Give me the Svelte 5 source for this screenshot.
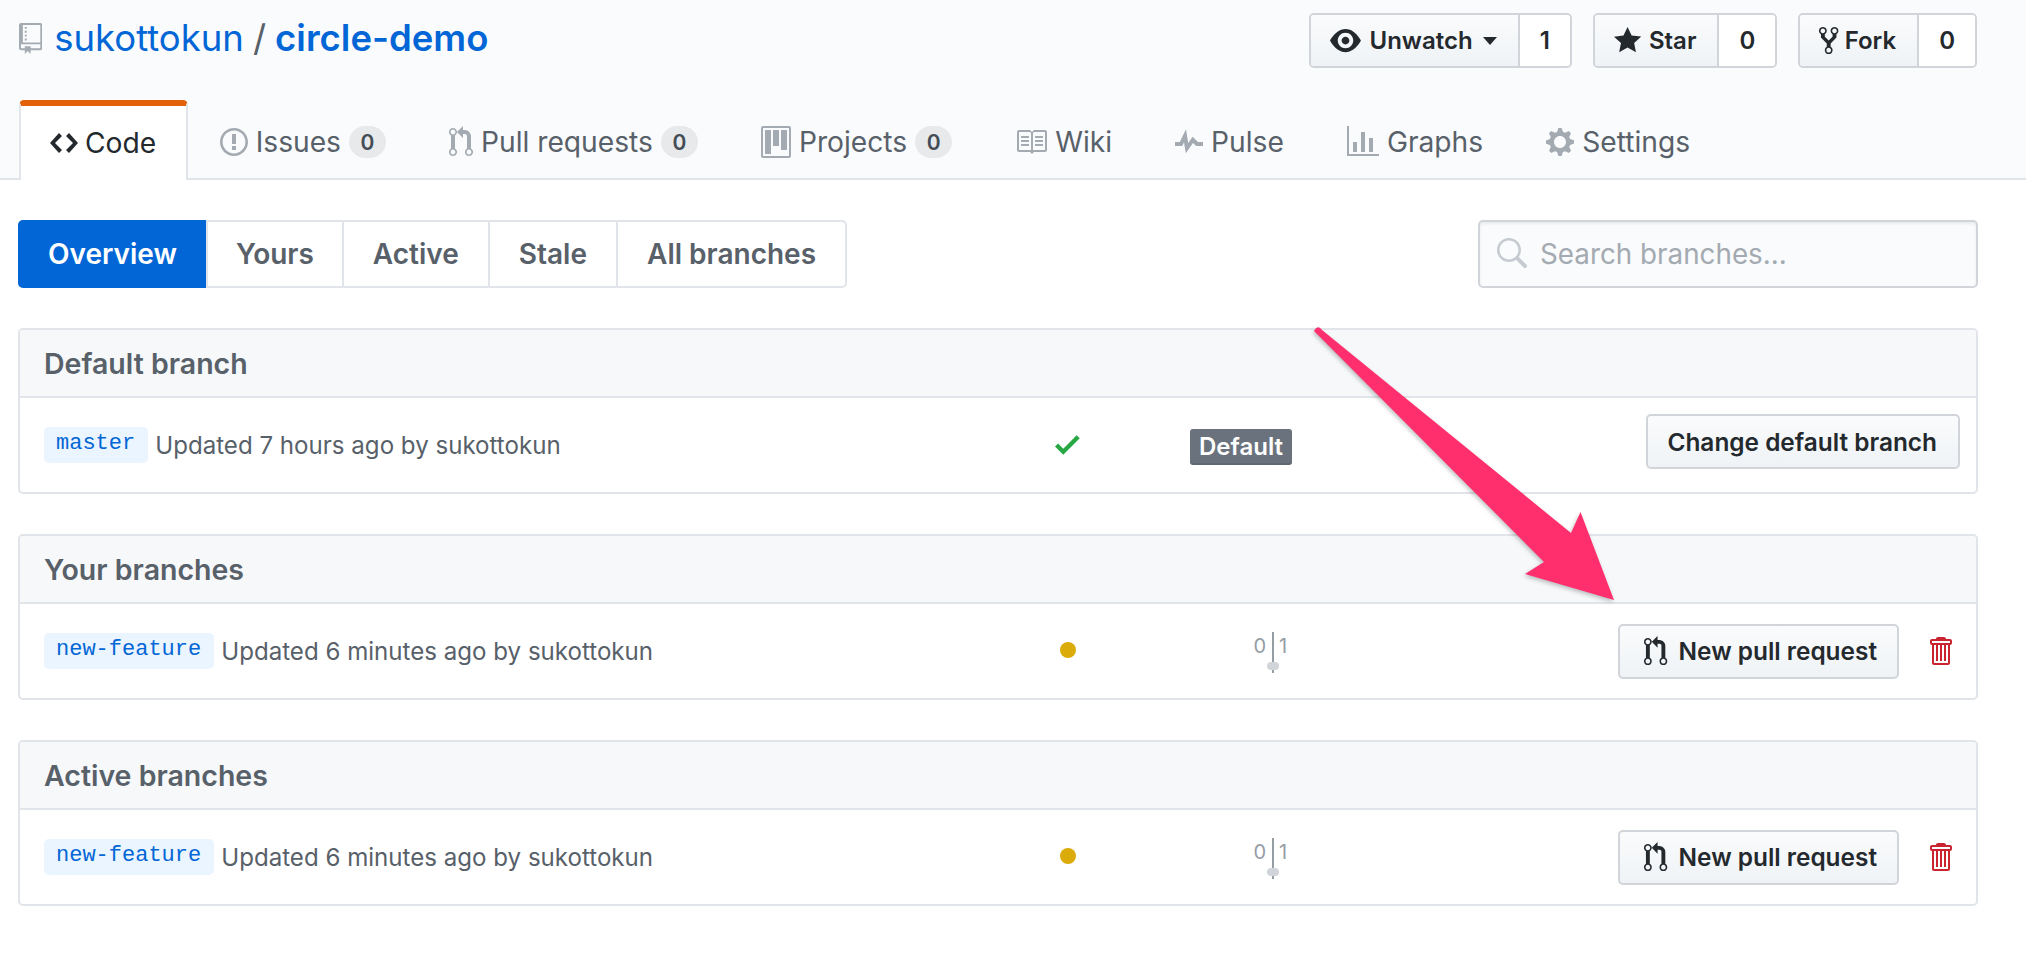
<script lang="ts">
  const icons = {
    repo: { w: 12, d: 'M4 9H3V8h1v1zm0-3H3v1h1V6zm0-2H3v1h1V4zm0-2H3v1h1V2zm8-1v12c0 .55-.45 1-1 1H6v2l-1.5-1.5L3 16v-2H1c-.55 0-1-.45-1-1V1c0-.55.45-1 1-1h10c.55 0 1 .45 1 1zm-1 10H1v2h2v-1h3v1h5v-2zm0-10H2v9h9V1z' },
    eye: { w: 16, d: 'M8.06 2C3 2 0 8 0 8s3 6 8.06 6C13 14 16 8 16 8s-3-6-7.94-6zM8 12c-2.2 0-4-1.78-4-4 0-2.2 1.8-4 4-4 2.22 0 4 1.8 4 4 0 2.22-1.78 4-4 4zm2-4c0 1.11-.89 2-2 2-1.11 0-2-.89-2-2 0-1.11.89-2 2-2 1.11 0 2 .89 2 2z' },
    star: { w: 14, d: 'M14 6l-4.9-.64L7 1 4.9 5.36 0 6l3.6 3.26L2.67 14 7 11.67 11.33 14l-.93-4.74L14 6z' },
    fork: { w: 10, d: 'M8 1a1.993 1.993 0 0 0-1 3.72V6L5 8 3 6V4.72A1.993 1.993 0 0 0 2 1a1.993 1.993 0 0 0-1 3.72V6.5l3 3v1.78A1.993 1.993 0 0 0 5 15a1.993 1.993 0 0 0 1-3.72V9.5l3-3V4.72A1.993 1.993 0 0 0 8 1zM2 4.2C1.34 4.2.8 3.65.8 3c0-.65.55-1.2 1.2-1.2.65 0 1.2.55 1.2 1.2 0 .65-.55 1.2-1.2 1.2zm3 10c-.66 0-1.2-.55-1.2-1.2 0-.65.55-1.2 1.2-1.2.65 0 1.2.55 1.2 1.2 0 .65-.55 1.2-1.2 1.2zm3-10c-.66 0-1.2-.55-1.2-1.2 0-.65.55-1.2 1.2-1.2.65 0 1.2.55 1.2 1.2 0 .65-.55 1.2-1.2 1.2z' },
    code: { w: 14, d: 'M9.5 3L8 4.5 11.5 8 8 11.5 9.5 13 14 8 9.5 3zm-5 0L0 8l4.5 5L6 11.5 2.5 8 6 4.5 4.5 3z' },
    issue: { w: 14, d: 'M7 2.3c3.14 0 5.7 2.56 5.7 5.7s-2.56 5.7-5.7 5.7A5.71 5.71 0 0 1 1.3 8c0-3.14 2.56-5.7 5.7-5.7zM7 1C3.14 1 0 4.14 0 8s3.14 7 7 7 7-3.14 7-7-3.14-7-7-7zm1 3H6v5h2V4zm0 6H6v2h2v-2z' },
    pr: { w: 12, d: 'M11 11.28V5c-.03-.78-.34-1.47-.94-2.06C9.46 2.35 8.78 2.03 8 2H7V0L4 3l3 3V4h1c.27.02.48.11.69.31.21.2.3.42.31.69v6.28A1.993 1.993 0 0 0 10 15a1.993 1.993 0 0 0 1-3.72zm-1 2.92c-.66 0-1.2-.55-1.2-1.2 0-.65.55-1.2 1.2-1.2.65 0 1.2.55 1.2 1.2 0 .65-.55 1.2-1.2 1.2zM4 3c0-1.11-.89-2-2-2a1.993 1.993 0 0 0-1 3.72v6.56A1.993 1.993 0 0 0 2 15a1.993 1.993 0 0 0 1-3.72V4.72c.59-.34 1-.98 1-1.72zm-.8 10c0 .66-.55 1.2-1.2 1.2-.65 0-1.2-.55-1.2-1.2 0-.65.55-1.2 1.2-1.2.65 0 1.2.55 1.2 1.2zM2 4.2C1.34 4.2.8 3.65.8 3c0-.65.55-1.2 1.2-1.2.65 0 1.2.55 1.2 1.2 0 .65-.55 1.2-1.2 1.2z' },
    project: { w: 15, d: 'M10 12h3V2h-3v10zm-4-2h3V2H6v8zm-4 4h3V2H2v12zm-1 1h13V1H1v14zM14 0H1a1 1 0 0 0-1 1v14a1 1 0 0 0 1 1h13a1 1 0 0 0 1-1V1a1 1 0 0 0-1-1z' },
    book: { w: 16, d: 'M3 5h4v1H3V5zm0 3h4V7H3v1zm0 2h4V9H3v1zm11-5h-4v1h4V5zm0 2h-4v1h4V7zm0 2h-4v1h4V9zm2-6v9c0 .55-.45 1-1 1H9.5l-1 1-1-1H2c-.55 0-1-.45-1-1V3c0-.55.45-1 1-1h5.5l1 1 1-1H15c.55 0 1 .45 1 1zm-8 .5L7.5 3H2v9h6V3.5zm7-.5H9.5l-.5.5V12h6V3z' },
    pulse: { w: 14, d: 'M11.5 8L8.8 5.4 6.6 8.5 5.5 1.6 2.38 8H0v2h3.6l.9-1.8.9 5.4L9 8.5l1.6 1.5H14V8z' },
    graph: { w: 16, d: 'M16 14v1H0V0h1v14h15zM5 13H3V8h2v5zm4 0H7V3h2v10zm4 0h-2V6h2v7z' },
    gear: { w: 14, d: 'M14 8.77v-1.6l-1.94-.64-.45-1.09.88-1.84-1.13-1.13-1.81.91-1.09-.45-.69-1.92h-1.6l-.63 1.94-1.11.45-1.84-.88-1.13 1.13.91 1.81-.45 1.09L0 7.23v1.59l1.94.64.45 1.09-.88 1.84 1.13 1.13 1.81-.91 1.09.45.69 1.92h1.59l.63-1.94 1.11-.45 1.84.88 1.13-1.13-.92-1.81.47-1.09L14 8.75v.02zM7 11c-1.66 0-3-1.34-3-3s1.34-3 3-3 3 1.34 3 3-1.34 3-3 3z' },
    search: { w: 16, d: 'M15.7 13.3l-3.81-3.83A5.93 5.93 0 0 0 13 6c0-3.31-2.69-6-6-6S1 2.69 1 6s2.69 6 6 6c1.3 0 2.48-.41 3.47-1.11l3.83 3.81c.19.2.45.3.7.3.25 0 .52-.09.7-.3a.996.996 0 0 0 0-1.4v-.01zM7 10.7c-2.59 0-4.7-2.11-4.7-4.7 0-2.59 2.11-4.7 4.7-4.7 2.59 0 4.7 2.11 4.7 4.7 0 2.59-2.11 4.7-4.7 4.7z' },
    check: { w: 12, d: 'M12 5l-8 8-4-4 1.5-1.5L4 10l6.5-6.5L12 5z' },
    trash: { w: 12, d: 'M11 2H9c0-.55-.45-1-1-1H5c-.55 0-1 .45-1 1H2c-.55 0-1 .45-1 1v1c0 .55.45 1 1 1v9c0 .55.45 1 1 1h7c.55 0 1-.45 1-1V5c.55 0 1-.45 1-1V3c0-.55-.45-1-1-1zm-1 12H3V5h1v8h1V5h1v8h1V5h1v8h1V5h1v9zm1-10H2V3h9v1z' }
  };

  const actions = [
    { icon: 'eye', label: 'Unwatch', caret: true, count: 1 },
    { icon: 'star', label: 'Star', count: 0 },
    { icon: 'fork', label: 'Fork', count: 0 }
  ];

  const tabs = [
    { icon: 'code', label: 'Code', selected: true },
    { icon: 'issue', label: 'Issues', count: 0 },
    { icon: 'pr', label: 'Pull requests', count: 0 },
    { icon: 'project', label: 'Projects', count: 0 },
    { icon: 'book', label: 'Wiki' },
    { icon: 'pulse', label: 'Pulse' },
    { icon: 'graph', label: 'Graphs' },
    { icon: 'gear', label: 'Settings' }
  ];

  const filters = ['Overview', 'Yours', 'Active', 'Stale', 'All branches'];

  const groups = [
    { title: 'Default branch', branch: 'master', ago: '7 hours', isDefault: true },
    { title: 'Your branches', branch: 'new-feature', ago: '6 minutes' },
    { title: 'Active branches', branch: 'new-feature', ago: '6 minutes' }
  ];
</script>

{#snippet icon(name, size = 32)}
  <svg class="octicon" viewBox="0 0 {icons[name].w} 16" height={size} width={(icons[name].w * size) / 16}>
    <path d={icons[name].d} fill="currentColor" fill-rule="evenodd" />
  </svg>
{/snippet}

<div class="page">
  <header class="repohead">
    <div class="titlebar">
      <h1>
        <span class="repo-icon">{@render icon('repo', 31)}</span>
        <a class="owner" href="#owner">sukottokun</a>
        <span class="slash">/</span>
        <a class="name" href="#repo">circle-demo</a>
      </h1>
      <ul class="pagehead-actions">
        {#each actions as a}
          <li class="social">
            <span class="social-btn">
              {@render icon(a.icon, 31)}
              <span>{a.label}</span>
              {#if a.caret}<i class="caret"></i>{/if}
            </span>
            <span class="social-count">{a.count}</span>
          </li>
        {/each}
      </ul>
    </div>
    <nav class="reponav">
      {#each tabs as t}
        <a class="tab" class:selected={t.selected} href="#tab">
          <span class="tab-icon">{@render icon(t.icon, 32)}</span>
          <span>{t.label}</span>
          {#if t.count !== undefined}<span class="counter">{t.count}</span>{/if}
        </a>
      {/each}
    </nav>
  </header>

  <main class="content">
    <div class="filterbar">
      <div class="subnav">
        {#each filters as f, i}
          <a class="subnav-item" class:active={i === 0} href="#f">{f}</a>
        {/each}
      </div>
      <div class="search">
        <span class="search-icon">{@render icon('search', 32)}</span>
        <span class="placeholder">Search branches...</span>
      </div>
    </div>

    {#each groups as g}
      <section class="box">
        <h3 class="box-header">{g.title}</h3>
        <div class="row">
          <div class="branch-info">
            <a class="branch" href="#b">{g.branch}</a>
            <span class="meta">Updated {g.ago} ago by sukottokun</span>
          </div>
          <div class="status">
            {#if g.isDefault}
              <span class="ok">{@render icon('check', 33)}</span>
            {:else}
              <span class="dot"></span>
            {/if}
          </div>
          <div class="compare">
            {#if g.isDefault}
              <span class="default-label">Default</span>
            {:else}
              <div class="diverge">
                <span class="behind">0</span>
                <span class="ahead">1</span>
                <i class="blob"></i>
              </div>
            {/if}
          </div>
          <div class="row-actions">
            {#if g.isDefault}
              <button class="btn change">Change default branch</button>
            {:else}
              <button class="btn">{@render icon('pr', 31)}<span>New pull request</span></button>
              <span class="trash">{@render icon('trash', 32)}</span>
            {/if}
          </div>
        </div>
      </section>
    {/each}
  </main>

  <svg class="arrow" viewBox="0 0 2026 956" width="2026" height="956" aria-hidden="true">
    <path d="M1314 331 Q1318 324 1322 330 L1571 533 L1580.5 512 L1614 600 L1525 574 L1544 562 Z" fill="#ff2f6e" />
  </svg>
</div>

<style>
  :global(body) {
    margin: 0;
    background: #fff;
  }

  .page {
    position: relative;
    width: 2026px;
    height: 956px;
    overflow: hidden;
    font-family: Inter, 'Liberation Sans', sans-serif;
    font-size: 28px;
    color: #24292e;
  }

  .octicon {
    display: block;
    flex: none;
  }

  a {
    text-decoration: none;
    color: inherit;
  }

  /* repo header */
  .repohead {
    height: 180px;
    box-sizing: border-box;
    background: #fafbfc;
    border-bottom: 2px solid #e1e4e8;
    padding: 13px 49px 0 19px;
  }

  .titlebar {
    display: flex;
    justify-content: space-between;
    align-items: flex-start;
    height: 87px;
  }

  h1 {
    margin: 5px 0 0;
    display: flex;
    align-items: center;
    font-size: 36.5px;
    font-weight: 400;
    line-height: 40px;
  }

  .repo-icon {
    color: #a3aab1;
    margin-right: 12px;
  }

  .owner {
    color: #0366d6;
  }

  .slash {
    color: #586069;
    margin: 0 9px;
  }

  .name {
    color: #0366d6;
    font-weight: 600;
  }

  .pagehead-actions {
    list-style: none;
    display: flex;
    gap: 21px;
    margin: 0;
    padding: 0;
  }

  .social {
    display: flex;
    height: 55px;
    box-sizing: border-box;
    border: 2px solid #d1d5da;
    border-radius: 5px;
    font-size: 24px;
    font-weight: 600;
    overflow: hidden;
  }

  .social-btn {
    display: flex;
    align-items: center;
    gap: 8px;
    padding: 0 21px 0 19px;
    background: linear-gradient(#fafbfc, #eff3f6);
    border-right: 2px solid #d1d5da;
  }

  .social:last-child .social-btn {
    gap: 6px;
  }

  .caret {
    width: 0;
    height: 0;
    margin-left: 2px;
    border-top: 8px solid #24292e;
    border-left: 7px solid transparent;
    border-right: 7px solid transparent;
  }

  .social-count {
    display: flex;
    align-items: center;
    padding: 0 20px;
    background: #fff;
  }

  .reponav {
    display: flex;
    height: 80px;
    font-size: 28.2px;
  }

  .tab {
    display: flex;
    align-items: center;
    gap: 8px;
    height: 80px;
    box-sizing: border-box;
    padding: 4px 31.5px 0;
    color: #586069;
  }

  .tab-icon {
    color: #a3aab1;
  }

  .tab.selected {
    background: #fff;
    color: #24292e;
    border-top: 6px solid #e36209;
    border-left: 2px solid #e1e4e8;
    border-right: 2px solid #e1e4e8;
    border-radius: 5px 5px 0 0;
    padding: 0 30px 0 29px;
    gap: 7px;
  }

  .tab.selected .tab-icon {
    color: #24292e;
  }

  .counter {
    display: inline-flex;
    align-items: center;
    justify-content: center;
    width: 37px;
    height: 32px;
    border-radius: 16px;
    background: rgba(27, 31, 35, 0.08);
    color: #444d56;
    font-size: 21px;
    font-weight: 600;
  }

  /* content */
  .content {
    padding: 40px 48px 0 18px;
  }

  .filterbar {
    display: flex;
    justify-content: space-between;
    margin-bottom: 40px;
  }

  .subnav {
    display: flex;
    height: 68px;
    box-sizing: border-box;
    border: 2px solid #e1e4e8;
    border-radius: 5px;
  }

  .subnav-item {
    display: flex;
    align-items: center;
    padding: 0 29px;
    border-left: 2px solid #e1e4e8;
    font-weight: 600;
    color: #586069;
  }

  .subnav-item:first-child {
    border-left: none;
  }

  .subnav-item:nth-child(2) {
    padding: 0 28px;
  }

  .subnav-item.active {
    margin: -2px 0 -2px -2px;
    padding: 0 29px 0 30px;
    background: #0366d6;
    color: #fff;
    border-radius: 5px 0 0 5px;
  }

  .search {
    display: flex;
    align-items: center;
    gap: 13px;
    width: 500px;
    height: 68px;
    box-sizing: border-box;
    padding-left: 15px;
    background: #fafbfc;
    border: 2px solid #d1d5da;
    border-radius: 5px;
    box-shadow: inset 0 2px 3px rgba(27, 31, 35, 0.075);
  }

  .search-icon {
    color: #c6cbd1;
  }

  .placeholder {
    color: #a3aab1;
    font-size: 27.8px;
  }

  .box {
    margin-bottom: 40px;
    height: 166px;
    box-sizing: border-box;
    border: 2px solid #e1e4e8;
    border-radius: 5px;
  }

  .box-header {
    display: flex;
    align-items: center;
    margin: 0;
    height: 68px;
    box-sizing: border-box;
    padding: 0 24px;
    background: #f6f8fa;
    border-bottom: 2px solid #e1e4e8;
    font-size: 28.5px;
    font-weight: 600;
    color: #586069;
    border-radius: 3px 3px 0 0;
  }

  .row {
    display: grid;
    grid-template-columns: 1000px 146px 1fr auto;
    align-items: center;
    height: 94px;
    padding: 0 16px 0 24px;
  }

  .branch-info {
    display: flex;
    align-items: center;
    gap: 7px;
  }

  .branch {
    padding: 0 13px 0 12px;
    height: 36px;
    line-height: 34px;
    background: #eaf5ff;
    border-radius: 5px;
    color: #0366d6;
    font-family: 'Liberation Mono', monospace;
    font-size: 22px;
  }

  .meta {
    color: #586069;
    font-size: 24.1px;
  }

  .status {
    display: flex;
    justify-content: flex-start;
    padding-left: 11px;
  }

  .ok {
    color: #28a745;
    margin-top: -2px;
  }

  .dot {
    width: 16px;
    height: 16px;
    margin: -2px 0 0 5px;
    border-radius: 50%;
    background: #dbab09;
  }

  .default-label {
    display: inline-block;
    padding: 0 9px;
    height: 36px;
    line-height: 35px;
    margin-top: 4px;
    border-radius: 3px;
    background: #6a737d;
    color: #fff;
    font-size: 24px;
    font-weight: 600;
    box-shadow: inset 0 -2px 0 rgba(27, 31, 35, 0.12);
  }

  .diverge {
    position: relative;
    width: 2px;
    height: 41px;
    margin: 3px 0 0 82px;
    background: #959da5;
  }

  .behind,
  .ahead {
    position: absolute;
    top: 2px;
    font-size: 20px;
    line-height: 24px;
    color: #959da5;
  }

  .behind {
    right: 8px;
  }

  .ahead {
    left: 7px;
  }

  .blob {
    position: absolute;
    top: 30px;
    left: -5px;
    width: 12px;
    height: 8px;
    border-radius: 4px;
    background: #d1d5da;
  }

  .row-actions {
    display: flex;
    align-items: center;
    gap: 29px;
  }

  .btn {
    display: flex;
    align-items: center;
    gap: 11px;
    height: 55px;
    box-sizing: border-box;
    padding: 0 20px 0 24px;
    border: 2px solid #d1d5da;
    border-radius: 5px;
    background: linear-gradient(#fafbfc, #eff3f6);
    color: #24292e;
    font-family: inherit;
    font-size: 24.4px;
    font-weight: 600;
  }

  .btn.change {
    padding: 0 21px 0 19px;
    margin-top: -7px;
  }

  .trash {
    color: #cb2431;
    margin-right: 8px;
  }

  .arrow {
    position: absolute;
    top: 0;
    left: 0;
    filter: drop-shadow(-1px 2px 2px rgba(0, 0, 0, 0.25));
  }
</style>
